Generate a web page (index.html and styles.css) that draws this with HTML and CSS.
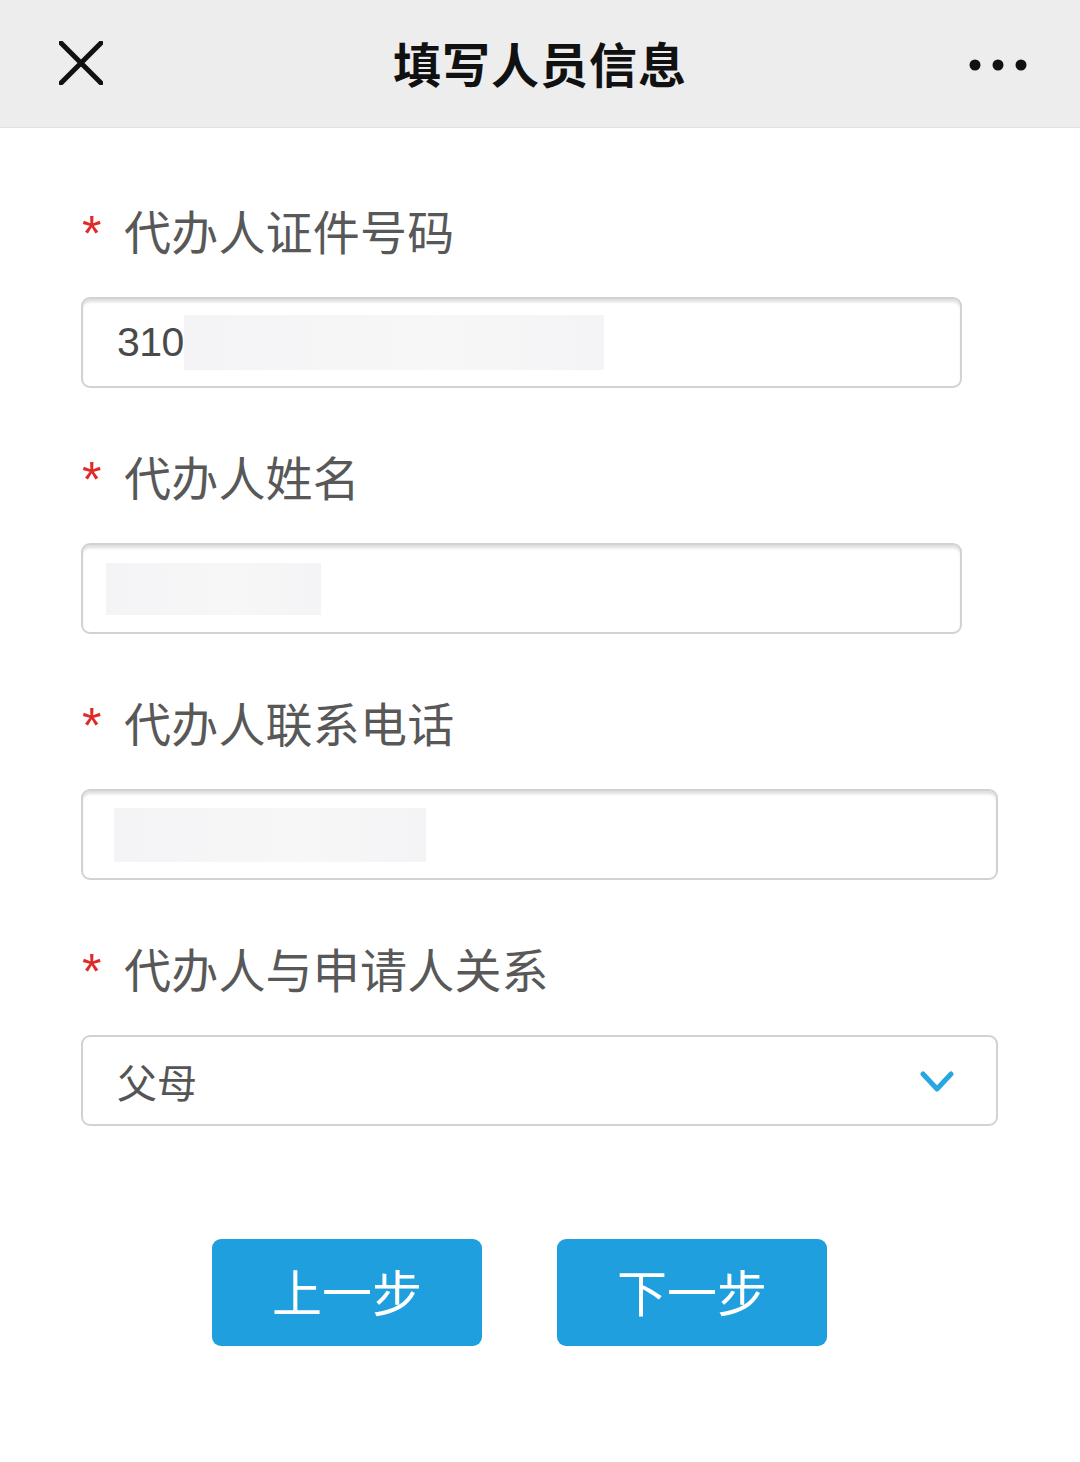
FILE: index.html
```html
<!DOCTYPE html>
<html lang="zh-CN">
<head>
<meta charset="utf-8">
<title>填写人员信息</title>
<link rel="stylesheet" href="styles.css">
</head>
<body>
<header class="topbar">
  <span class="icon-close">
    <svg width="44" height="44" viewBox="0 0 44 44"><path d="M2 2 L42 42 M42 2 L2 42" stroke="#111" stroke-width="5" stroke-linecap="round" fill="none"/></svg>
  </span>
  <h1 class="title">填写人员信息</h1>
  <span class="icon-more">
    <svg width="60" height="14" viewBox="0 0 60 14"><circle cx="7" cy="7" r="5.5" fill="#111"/><circle cx="30" cy="7" r="5.5" fill="#111"/><circle cx="53" cy="7" r="5.5" fill="#111"/></svg>
  </span>
</header>

<main class="form">
  <div class="field">
    <div class="label"><span class="req">*</span><span>代办人证件号码</span></div>
    <div class="input narrow"><span class="value">310</span><span class="mask mask-id"></span></div>
  </div>
  <div class="field">
    <div class="label"><span class="req">*</span><span>代办人姓名</span></div>
    <div class="input narrow"><span class="mask mask-name"></span></div>
  </div>
  <div class="field">
    <div class="label"><span class="req">*</span><span>代办人联系电话</span></div>
    <div class="input wide"><span class="mask mask-phone"></span></div>
  </div>
  <div class="field">
    <div class="label"><span class="req">*</span><span>代办人与申请人关系</span></div>
    <div class="select wide">
      <span class="select-value">父母</span>
      <svg class="chevron" width="34" height="22" viewBox="0 0 34 22"><path d="M3 3 L17 18 L31 3" stroke="#27a6e2" stroke-width="5" fill="none" stroke-linecap="round" stroke-linejoin="round"/></svg>
    </div>
  </div>

  <div class="actions">
    <button class="btn">上一步</button>
    <button class="btn">下一步</button>
  </div>
</main>
</body>
</html>
```

FILE: styles.css
```css
* { box-sizing: border-box; }
html, body { margin: 0; padding: 0; }
body {
  width: 1080px;
  min-height: 1462px;
  background: #fff;
  font-family: "Noto Sans CJK SC", "Noto Sans", sans-serif;
}
.topbar {
  height: 128px;
  background: #ededed;
  border-bottom: 1px solid #e2e2e2;
  display: flex;
  align-items: center;
  justify-content: space-between;
  padding: 0 52px 0 59px;
  position: relative;
}
.icon-close { display: flex; width: 44px; height: 44px; margin-top: -2px; }
.icon-more { display: flex; margin-top: 2px; }
.title {
  position: absolute;
  left: 0; right: 0;
  margin: 0;
  text-align: center;
  font-size: 48px;
  font-weight: 700;
  color: #111;
  line-height: 128px;
  top: -2px;
  pointer-events: none;
  letter-spacing: 1px;
}
.form {
  padding: 64px 0 0 81px;
}
.field { margin-bottom: 50px; }
.label {
  height: 80px;
  display: flex;
  align-items: center;
  font-size: 47px;
  color: #585858;
  margin-bottom: 25px;
}
.label span:last-child { margin-top: -6px; letter-spacing: 0.2px; }
.req {
  color: #e02a2a;
  font-family: "Liberation Sans", sans-serif;
  font-size: 50px;
  width: 43px;
  padding-left: 1px;
  margin-top: 4px;
}
.input, .select {
  height: 91px;
  border: 2px solid #d2d2d2;
  border-radius: 9px;
  background: #fff;
  display: flex;
  align-items: center;
}
.input {
  box-shadow: inset 0 4px 3px -1px rgba(0,0,0,0.13);
}
.narrow { width: 881px; }
.wide { width: 917px; }
.value {
  font-family: "Liberation Sans", sans-serif;
  font-size: 41px;
  color: #4a4a4a;
  padding-left: 34px;
  letter-spacing: -0.5px;
}
.mask {
  display: block;
  background: linear-gradient(90deg, #f4f4f6, #f7f7f8 60%, #f4f4f6);
}
.mask-id { width: 420px; height: 55px; }
.mask-name { width: 215px; height: 52px; margin-left: 23px; }
.mask-phone { width: 312px; height: 54px; margin-left: 31px; }
.select {
  justify-content: space-between;
  padding: 0 42px 0 34px;
}
.select-value {
  font-size: 40px;
  color: #555;
}
.chevron { margin-top: 2px; }
.actions {
  display: flex;
  gap: 75px;
  padding-left: 131px;
  margin-top: 113px;
}
.btn {
  width: 270px;
  height: 107px;
  border: none;
  border-radius: 9px;
  background: #1f9fdd;
  color: #fff;
  font-family: "Noto Sans CJK SC", "Noto Sans", sans-serif;
  font-size: 50px;
  font-weight: 400;
  padding: 0 0 6px;
}
```
